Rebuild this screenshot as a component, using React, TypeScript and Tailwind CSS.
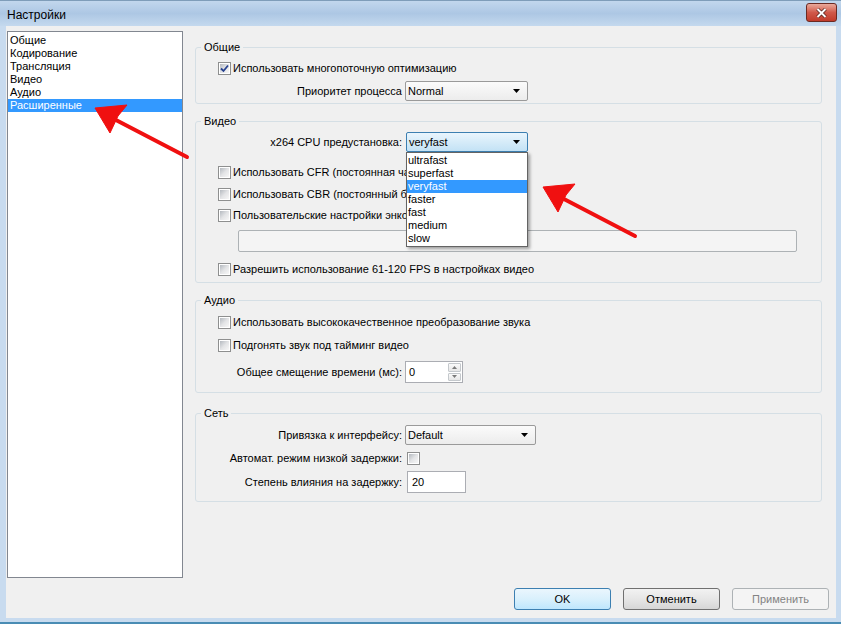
import React from 'react';

const FONT = "font-['Liberation_Sans',Arial,sans-serif]";

const CheckBox: React.FC<{ checked?: boolean }> = ({ checked }) => (
  <span className="relative flex w-[13px] h-[13px] shrink-0 border border-[#8e8f8f] bg-white p-[1px]">
    <span className="flex-1 bg-gradient-to-br from-[#b4b9bf] via-[#e3e4e6] to-[#f7f7f7]" />
    {checked && (
      <svg className="absolute left-[1px] top-[1px]" width="9" height="9" viewBox="0 0 9 9">
        <path d="M1 4.5 L3.5 7 L8 1.5" fill="none" stroke="#26418f" strokeWidth="1.8" />
      </svg>
    )}
  </span>
);

const Arrow: React.FC = () => (
  <svg width="7" height="4" viewBox="0 0 7 4" className="shrink-0">
    <polygon points="0,0 7,0 3.5,4" fill="#000" />
  </svg>
);

const Combo: React.FC<{ value: string; width: string; focused?: boolean; children?: React.ReactNode }> = ({
  value,
  width,
  focused,
  children,
}) => (
  <div className={`relative ${width} h-[20px]`}>
    <div
      className={`flex items-center h-full pl-[2px] pr-[7px] rounded-[2px] border ${
        focused
          ? 'border-[#3c7fb1] bg-gradient-to-b from-[#e9f5fd] to-[#c3e2f5]'
          : 'border-[#9a9a9a] bg-gradient-to-b from-[#fbfbfb] to-[#ececec]'
      }`}
    >
      <span className="flex-1">{value}</span>
      <Arrow />
    </div>
    {children}
  </div>
);

// clipped = the row runs under the open dropdown, so cut it at the list's left edge
const Row: React.FC<{ checked?: boolean; label: string; className?: string; clipped?: boolean }> = ({
  checked,
  label,
  className,
  clipped,
}) => (
  <div
    className={`flex items-center gap-[2px] pl-[22px] h-[13px] whitespace-nowrap ${
      clipped ? 'w-[210px] overflow-hidden' : ''
    } ${className ?? ''}`}
  >
    <CheckBox checked={checked} />
    <span>{label}</span>
  </div>
);

const Group: React.FC<{ title: string; className?: string; children: React.ReactNode }> = ({ title, className, children }) => (
  <fieldset className={`border border-[#d5dfe5] rounded-[3px] ${className ?? ''}`}>
    <legend className="ml-[5px] px-[3px] leading-[13px]">{title}</legend>
    {children}
  </fieldset>
);

const Btn: React.FC<{ label: string; kind?: 'default' | 'normal' | 'disabled' }> = ({ label, kind = 'normal' }) => {
  const cls =
    kind === 'default'
      ? 'border-[#3c7fb1] bg-gradient-to-b from-[#eaf6fd] via-[#d9f0fc] to-[#bee6fd] text-black'
      : kind === 'disabled'
      ? 'border-[#adb2b5] bg-[#f4f4f4] text-[#838383]'
      : 'border-[#707070] bg-gradient-to-b from-[#f2f2f2] via-[#e6e6e6] to-[#d6d6d6] text-black';
  return (
    <button className={`w-[97px] h-[22px] rounded-[3px] border ${cls} leading-none`}>{label}</button>
  );
};

const presets = ['ultrafast', 'superfast', 'veryfast', 'faster', 'fast', 'medium', 'slow'];
const pages = ['Общие', 'Кодирование', 'Трансляция', 'Видео', 'Аудио', 'Расширенные'];

export default function App() {
  return (
    <div className={`relative w-[841px] h-[624px] flex flex-col overflow-hidden bg-[#c8dbef] text-[11px] text-black ${FONT}`}>
      {/* Title bar */}
      <div className="h-[26px] shrink-0 flex items-start pl-[7px] pr-[4px] bg-gradient-to-b from-[#c2d7ed] via-[#adc7e4] to-[#c4d9ee] border-t border-[#7f9db9]">
        <span className="mt-[7px] text-[12px] leading-[14px]">Настройки</span>
        <div className="ml-auto mt-[2px] w-[31px] h-[19px] rounded-[3px] border border-[#6b2a22] bg-gradient-to-b from-[#e9a99b] via-[#d0594a] to-[#c13b2a] flex items-center justify-center">
          <svg width="11" height="10" viewBox="0 0 11 10">
            <path d="M1.5 1 L9.5 9 M9.5 1 L1.5 9" stroke="#4a1a14" strokeWidth="3.4" />
            <path d="M1.5 1 L9.5 9 M9.5 1 L1.5 9" stroke="#fff" strokeWidth="2" />
          </svg>
        </div>
      </div>

      {/* Body */}
      <div className="flex-1 ml-[6px] mr-[5px] bg-[#f0f0f0] flex flex-col pt-[5px]">
        <div className="flex items-start">
          {/* Page list */}
          <div className="ml-[1px] w-[176px] h-[547px] bg-white border border-[#828790] pt-[2px]">
            {pages.map(p => (
              <div
                key={p}
                className={`h-[13px] leading-[13px] pl-[2px] ${p === 'Расширенные' ? 'bg-[#3399ff] text-white' : ''}`}
              >
                {p}
              </div>
            ))}
          </div>

          {/* Settings groups */}
          <div className="ml-[12px] w-[627px] mt-[10px] flex flex-col">
            <Group title="Общие" className="pb-[2px]">
              <Row checked label="Использовать многопоточную оптимизацию" className="mt-[8px]" />
              <div className="flex items-center mt-[6px]">
                <span className="w-[206px] text-right">Приоритет процесса</span>
                <div className="ml-[3px]">
                  <Combo value="Normal" width="w-[123px]" />
                </div>
              </div>
            </Group>

            <Group title="Видео" className="mt-[11px] pb-[6px]">
              <div className="flex items-center mt-[4px]">
                <span className="w-[206px] text-right">x264 CPU предустановка:</span>
                <div className="ml-[4px] z-10">
                  <Combo value="veryfast" width="w-[122px]" focused>
                    <div className="absolute left-0 top-full w-[122px] bg-white border border-[#646464] py-[1px] shadow-[2px_2px_3px_rgba(0,0,0,0.35)]">
                      {presets.map(p => (
                        <div
                          key={p}
                          className={`h-[13px] leading-[13px] pl-[1px] ${p === 'veryfast' ? 'bg-[#3399ff] text-white' : ''}`}
                        >
                          {p}
                        </div>
                      ))}
                    </div>
                  </Combo>
                </div>
              </div>
              <Row clipped label="Использовать CFR (постоянная частота кадров)" className="mt-[14px]" />
              <Row clipped label="Использовать CBR (постоянный битрейт)" className="mt-[9px]" />
              <Row clipped label="Пользовательские настройки энкодера x264" className="mt-[8px]" />
              <div className="ml-[42px] mt-[8px] w-[559px] h-[22px] rounded-[2px] border border-[#adb2b5] bg-[#f4f4f4]" />
              <Row label="Разрешить использование 61-120 FPS в настройках видео" className="mt-[11px]" />
            </Group>

            <Group title="Аудио" className="mt-[11px] pb-[9px]">
              <Row label="Использовать высококачественное преобразование звука" className="mt-[9px]" />
              <Row label="Подгонять звук под тайминг видео" className="mt-[10px]" />
              <div className="flex items-center mt-[9px]">
                <span className="w-[206px] text-right">Общее смещение времени (мс):</span>
                <div className="ml-[3px] w-[58px] h-[22px] bg-white border border-[#abadb3] flex items-start">
                  <span className="flex-1 pl-[3px] pt-[2px]">0</span>
                  <div className="w-[15px] h-full flex flex-col gap-[1px] p-[1px]">
                    {[0, 1].map(i => (
                      <div
                        key={i}
                        className="flex-1 flex items-center justify-center rounded-[1px] border border-[#c4c8cc] bg-gradient-to-b from-[#fafafa] to-[#e6e6e6]"
                      >
                        <svg width="5" height="3" viewBox="0 0 5 3">
                          <polygon points={i === 0 ? '0,3 5,3 2.5,0' : '0,0 5,0 2.5,3'} fill="#7a7a7a" />
                        </svg>
                      </div>
                    ))}
                  </div>
                </div>
              </div>
            </Group>

            <Group title="Сеть" className="mt-[14px] pb-[8px]">
              <div className="flex items-center mt-[5px]">
                <span className="w-[206px] text-right">Привязка к интерфейсу:</span>
                <div className="ml-[3px]">
                  <Combo value="Default" width="w-[131px]" />
                </div>
              </div>
              <div className="flex items-center mt-[7px] h-[13px]">
                <span className="w-[206px] text-right">Автомат. режим низкой задержки:</span>
                <span className="ml-[5px]">
                  <CheckBox />
                </span>
              </div>
              <div className="flex items-center mt-[6px]">
                <span className="w-[206px] text-right">Степень влияния на задержку:</span>
                <div className="ml-[5px] w-[59px] h-[22px] bg-white border border-[#abadb3] pl-[4px] pt-[2px]">20</div>
              </div>
            </Group>
          </div>
        </div>

        {/* Buttons */}
        <div className="flex justify-end gap-[12px] mt-[10px] pr-[7px]">
          <Btn label="OK" kind="default" />
          <Btn label="Отменить" />
          <Btn label="Применить" kind="disabled" />
        </div>
      </div>
      <div className="h-[6px] shrink-0 border-b-[2px] border-[#4a8cb4]" />

      {/* Annotation arrows */}
      <svg className="absolute inset-0 pointer-events-none z-20" width="841" height="624" viewBox="0 0 841 624">
        <g fill="#f01010" stroke="#f01010">
          <line x1="187" y1="157" x2="114" y2="119" strokeWidth="4" strokeLinecap="round" />
          <polygon points="95,108 127,105 118,116 110,133" strokeWidth="1" strokeLinejoin="round" />
          <line x1="635" y1="236" x2="562" y2="198" strokeWidth="4" strokeLinecap="round" />
          <polygon points="543,187 575,184 566,195 558,212" strokeWidth="1" strokeLinejoin="round" />
        </g>
      </svg>
    </div>
  );
}
